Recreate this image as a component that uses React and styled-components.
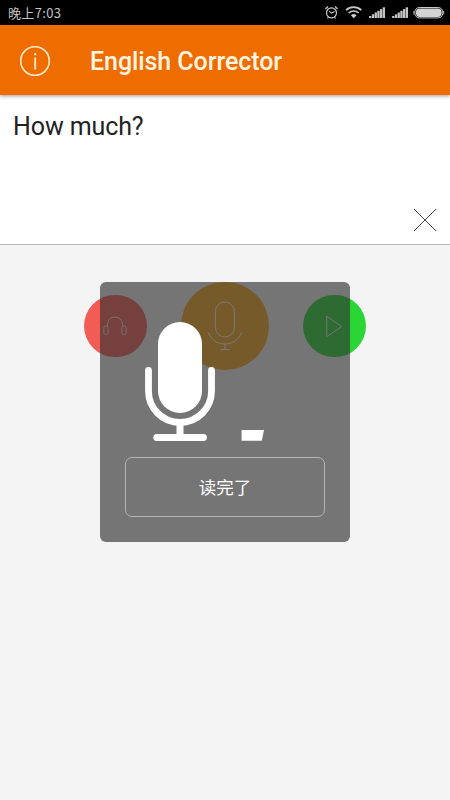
import styled, { createGlobalStyle } from "styled-components";

const App = () => {
  return (
    <>
      <GlobalStyle />
      <Screen>
        <StatusBar>
          <Clock>晚上7:03</Clock>
          <StatusIcons />
        </StatusBar>
        <Header>
          <InfoIcon />
          <Title>English Corrector</Title>
        </Header>
        <InputArea>
          <InputText>How much?</InputText>
          <ClearButton aria-label="Clear">
            <CloseIcon />
          </ClearButton>
        </InputArea>
        <Content>
          <Actions>
            <RoundButton $size={62.5} $color="#f25c55" aria-label="Listen">
              <HeadphonesIcon />
            </RoundButton>
            <RoundButton $size={87.5} $color="#f8a61c" aria-label="Speak">
              <ThinMicIcon />
            </RoundButton>
            <RoundButton $size={62.5} $color="#29d635" aria-label="Play">
              <PlayIcon />
            </RoundButton>
          </Actions>
          <Dialog>
            <Recording>
              <RecordingIcon />
            </Recording>
            <DoneButton>读完了</DoneButton>
          </Dialog>
        </Content>
      </Screen>
    </>
  );
};

const StatusIcons = () => (
  <svg width="122" height="18" viewBox="324 4 122 18" fill="none" stroke="#c9c9c9">
    <circle cx="331.5" cy="12.8" r="5" strokeWidth="1.2" />
    <path d="M331.5 13.2 L329.2 11.2 M331.5 13.2 L334.6 11.5" strokeWidth="1.1" />
    <path d="M325.4 9 L328 6.5 M337.6 9 L335 6.5 M328.5 17 L327.5 18.3 M334.5 17 L335.5 18.3" strokeWidth="1.2" />
    <path d="M346.1 10.2 A11 11 0 0 1 361.3 10.2" strokeWidth="1.8" />
    <path d="M348.7 13 A7.3 7.3 0 0 1 358.7 13" strokeWidth="1.6" />
    <path d="M350.9 15.3 L353.7 18.2 L356.5 15.3 A4 4 0 0 0 350.9 15.3 Z" fill="#d2d2d2" stroke="none" />
    {[369, 392].map((x) => (
      <g key={x} fill="#c4c4c4" stroke="none">
        <rect x={x + 0.1} y="16" width="2.3" height="2" />
        <rect x={x + 2.9} y="14.3" width="2.3" height="3.7" />
        <rect x={x + 5.6} y="12.5" width="2.3" height="5.5" />
        <rect x={x + 8.3} y="10.8" width="2.3" height="7.2" />
        <rect x={x + 11} y="9.1" width="2.3" height="8.9" />
        <rect x={x + 13.7} y="7.3" width="2.3" height="10.7" />
      </g>
    ))}
    <rect x="414.9" y="7.5" width="27.8" height="10.4" rx="4.4" strokeWidth="1" />
    <rect x="416" y="8.5" width="25.6" height="8.4" rx="3.6" fill="#d4d4d4" stroke="none" />
    <path d="M443.7 11 V14.4" strokeWidth="0.9" />
    <path d="M413.9 11 V14.4" strokeWidth="0.9" />
  </svg>
);

const InfoIcon = () => (
  <svg width="32" height="32" viewBox="0 0 32 32" fill="none" stroke="#ffeccb">
    <circle cx="16" cy="16" r="14.3" strokeWidth="1.6" />
    <path d="M16.2 12.6 V24.6" strokeWidth="1.8" />
    <path d="M16.2 8 V10.3" strokeWidth="1.9" />
  </svg>
);

const CloseIcon = () => (
  <svg width="24" height="24" viewBox="0 0 24 24" fill="none" stroke="#444" strokeWidth="1">
    <path d="M1 1 L23 23 M23 1 L1 23" />
  </svg>
);

const HeadphonesIcon = () => (
  <svg width="24" height="20" viewBox="0 0 24 20" fill="none" stroke="#fff" strokeWidth="0.8">
    <path d="M4.6 10.2 V8.6 C4.6 4 7.7 1.1 12 1.1 C16.3 1.1 19.4 4 19.4 8.6 V10.2" />
    <rect x="0.9" y="10" width="4.2" height="8.6" rx="1.6" />
    <rect x="18.9" y="10" width="4.2" height="8.6" rx="1.6" />
  </svg>
);

const ThinMicIcon = () => (
  <svg width="36" height="50" viewBox="0 0 36 50" fill="none" stroke="#fff" strokeWidth="1">
    <rect x="8.4" y="1" width="19" height="35" rx="9.5" />
    <path d="M1 31.5 C4 38.7 10 43 18 43 C26 43 31.5 38.7 34.6 31.5" />
    <path d="M18 43 V48.6 M13.3 48.6 H22.3" />
  </svg>
);

const PlayIcon = () => (
  <svg width="16" height="23" viewBox="0 0 16 23" fill="none" stroke="#fff" strokeWidth="0.9" strokeLinejoin="round">
    <path d="M0.7 1.3 L15.7 11.5 L0.7 21.7 Z" />
  </svg>
);

const RecordingIcon = () => (
  <svg width="121" height="121" viewBox="0 0 121 121" fill="none" stroke="#fff" strokeLinecap="round">
    <rect x="13" y="2" width="44" height="91" rx="22" fill="#fff" stroke="none" />
    <path d="M3.5 50.5 V71 A31.5 31.5 0 0 0 66.5 71 V50.5" strokeWidth="6.8" />
    <path d="M35 103 V117" strokeWidth="7" />
    <path d="M11.8 117.4 H58.4" strokeWidth="7" />
    <path d="M96.6 110 H119 L116.8 120.8 H96.6 Z" fill="#fff" stroke="none" />
  </svg>
);

const GlobalStyle = createGlobalStyle`
  * {
    box-sizing: border-box;
  }

  body {
    margin: 0;
    font-family: Roboto, "Noto Sans CJK SC", sans-serif;
  }

  button {
    padding: 0;
    border: none;
    background: none;
    font-family: inherit;
  }

  svg {
    display: block;
    flex-shrink: 0;
  }
`;

const Screen = styled.div`
  display: flex;
  flex-direction: column;
  width: 450px;
  height: 800px;
  overflow: hidden;
  background-color: #f4f4f4;
`;

const StatusBar = styled.div`
  display: flex;
  justify-content: space-between;
  height: 25px;
  padding: 4px 4px 0 8px;
  background-color: #000;
`;

const Clock = styled.span`
  color: #c4c4c4;
  font-family: "Noto Sans CJK SC", sans-serif;
  font-size: 13px;
  line-height: 17px;
  letter-spacing: 0.35px;
`;

const Header = styled.header`
  position: relative;
  z-index: 1;
  display: flex;
  align-items: center;
  gap: 39px;
  height: 70px;
  padding: 2px 19px 0;
  background-color: #ef6c00;
  box-shadow: 0 1px 4px rgba(0, 0, 0, 0.4);
`;

const Title = styled.h1`
  margin: 0;
  padding-top: 2px;
  color: #fff5e0;
  font-size: 25px;
  font-weight: 500;
  line-height: 30px;
  letter-spacing: -0.08px;
`;

const InputArea = styled.div`
  display: flex;
  flex-direction: column;
  justify-content: space-between;
  height: 150px;
  padding: 17px 13px 12px;
  background-color: #fff;
  border-bottom: 1px solid #b5b5b5;
`;

const InputText = styled.p`
  margin: 0;
  color: #222;
  font-size: 25px;
  line-height: 30px;
  letter-spacing: -0.1px;
`;

const ClearButton = styled.button`
  align-self: flex-end;
`;

const Content = styled.main`
  position: relative;
  flex: 1;
  padding-top: 37.4px;
`;

const Actions = styled.div`
  display: flex;
  justify-content: space-between;
  align-items: center;
  padding: 0 84.5px 0 84px;
`;

const RoundButton = styled.button`
  display: flex;
  justify-content: center;
  align-items: center;
  width: ${({ $size }) => $size}px;
  height: ${({ $size }) => $size}px;
  background-color: ${({ $color }) => $color};
  border-radius: 50%;
`;

const Dialog = styled.div`
  position: absolute;
  top: 37.4px;
  left: 100px;
  display: flex;
  flex-direction: column;
  width: 250px;
  height: 260px;
  padding: 37.6px 25px 25px;
  background-color: rgba(49, 49, 49, 0.65);
  border-radius: 6px;
`;

const Recording = styled.div`
  display: flex;
  padding-left: 20px;
  margin-bottom: 16.5px;
`;

const DoneButton = styled.button`
  height: 60px;
  padding-bottom: 1px;
  color: #fff;
  font-size: 17.5px;
  border: 1px solid #b4b4b4;
  border-radius: 7px;
`;

export default App;
